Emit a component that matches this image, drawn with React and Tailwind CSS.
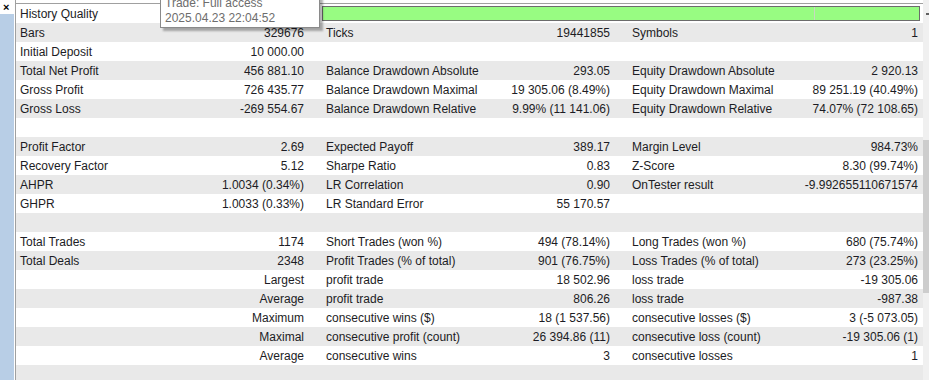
const rows = [
  ['Bars', '329676', 'Ticks', '19441855', 'Symbols', '1'],
  ['Initial Deposit', '10 000.00', '', '', '', ''],
  ['Total Net Profit', '456 881.10', 'Balance Drawdown Absolute', '293.05', 'Equity Drawdown Absolute', '2 920.13'],
  ['Gross Profit', '726 435.77', 'Balance Drawdown Maximal', '19 305.06 (8.49%)', 'Equity Drawdown Maximal', '89 251.19 (40.49%)'],
  ['Gross Loss', '-269 554.67', 'Balance Drawdown Relative', '9.99% (11 141.06)', 'Equity Drawdown Relative', '74.07% (72 108.65)'],
  ['', '', '', '', '', ''],
  ['Profit Factor', '2.69', 'Expected Payoff', '389.17', 'Margin Level', '984.73%'],
  ['Recovery Factor', '5.12', 'Sharpe Ratio', '0.83', 'Z-Score', '8.30 (99.74%)'],
  ['AHPR', '1.0034 (0.34%)', 'LR Correlation', '0.90', 'OnTester result', '-9.992655110671574'],
  ['GHPR', '1.0033 (0.33%)', 'LR Standard Error', '55 170.57', '', ''],
  ['', '', '', '', '', ''],
  ['Total Trades', '1174', 'Short Trades (won %)', '494 (78.14%)', 'Long Trades (won %)', '680 (75.74%)'],
  ['Total Deals', '2348', 'Profit Trades (% of total)', '901 (76.75%)', 'Loss Trades (% of total)', '273 (23.25%)'],
  ['', 'Largest', 'profit trade', '18 502.96', 'loss trade', '-19 305.06'],
  ['', 'Average', 'profit trade', '806.26', 'loss trade', '-987.38'],
  ['', 'Maximum', 'consecutive wins ($)', '18 (1 537.56)', 'consecutive losses ($)', '3 (-5 073.05)'],
  ['', 'Maximal', 'consecutive profit (count)', '26 394.86 (11)', 'consecutive loss (count)', '-19 305.06 (1)'],
  ['', 'Average', 'consecutive wins', '3', 'consecutive losses', '1'],
  ['', '', '', '', '', ''],
];

function Row({ cells, shaded }) {
  const [l1, v1, l2, v2, l3, v3] = cells;
  return (
    <div className={`flex h-[19px] items-center ${shaded ? 'bg-[#e9e9e9]' : 'bg-white'}`}>
      <div className="flex w-[302px] items-center">
        <span className="pl-[4px] whitespace-nowrap">{l1}</span>
        <span className="ml-auto pr-[14px] whitespace-nowrap">{v1}</span>
      </div>
      <div className="flex w-[302px] items-center">
        <span className="pl-[8px] whitespace-nowrap">{l2}</span>
        <span className="ml-auto pr-[10px] whitespace-nowrap">{v2}</span>
      </div>
      <div className="flex w-[303px] items-center">
        <span className="pl-[12px] whitespace-nowrap">{l3}</span>
        <span className="ml-auto pr-[5px] whitespace-nowrap">{v3}</span>
      </div>
    </div>
  );
}

export default function App() {
  return (
    <div className="relative flex h-[380px] w-[929px] overflow-hidden bg-white text-[12px] leading-none text-[#1c1c24] font-['Liberation_Sans',Arial,sans-serif]">
      {/* side strip */}
      <div className="flex w-[15px] flex-col">
        <div className="flex h-[14px] items-start justify-start pl-[3px] pt-[2px] text-[11px] font-bold text-black">×</div>
        <div className="flex flex-1">
          <div className="w-[14px] bg-[#b8cee6]"></div>
          <div className="w-[1px] bg-white"></div>
        </div>
      </div>

      {/* report */}
      <div className="flex w-[908px] flex-col border-l border-[#a0a0a0] pt-[3px]">
        <div className="border-t border-[#a0a0a0]">
          <div className="flex h-[19px] items-center bg-white">
            <div className="w-[302px] pl-[4px]">History Quality</div>
            <div className="ml-[4px] flex h-[15px] w-[598px] border border-[#6c6c6c] bg-[#98fc82]">
              <div className="w-[492px] border-r border-[#c8d8c0]"></div>
              <div className="flex-1"></div>
            </div>
          </div>
          {rows.map((r, i) => (
            <Row key={i} cells={r} shaded={i % 2 === 0} />
          ))}
        </div>
      </div>

      {/* scrollbar */}
      <div className="flex w-[6px] flex-col bg-[#f0f0f0]">
        <div className="mt-[13px] ml-[3px] h-[2px] w-[3px] bg-[#606060]"></div>
        <div className="mt-[125px] h-[153px] bg-[#cdcdcd]"></div>
      </div>

      {/* tooltip */}
      <div className="absolute left-[160px] top-[-12px] w-[160px] border border-[#8a8a8a] bg-white px-[4px] pt-[7px] pb-[1px] text-[#6d6d6d] leading-[15px] shadow-[3px_3px_2px_rgba(0,0,0,0.3)]">
        <div>Trade: Full access</div>
        <div>2025.04.23 22:04:52</div>
      </div>
    </div>
  );
}
